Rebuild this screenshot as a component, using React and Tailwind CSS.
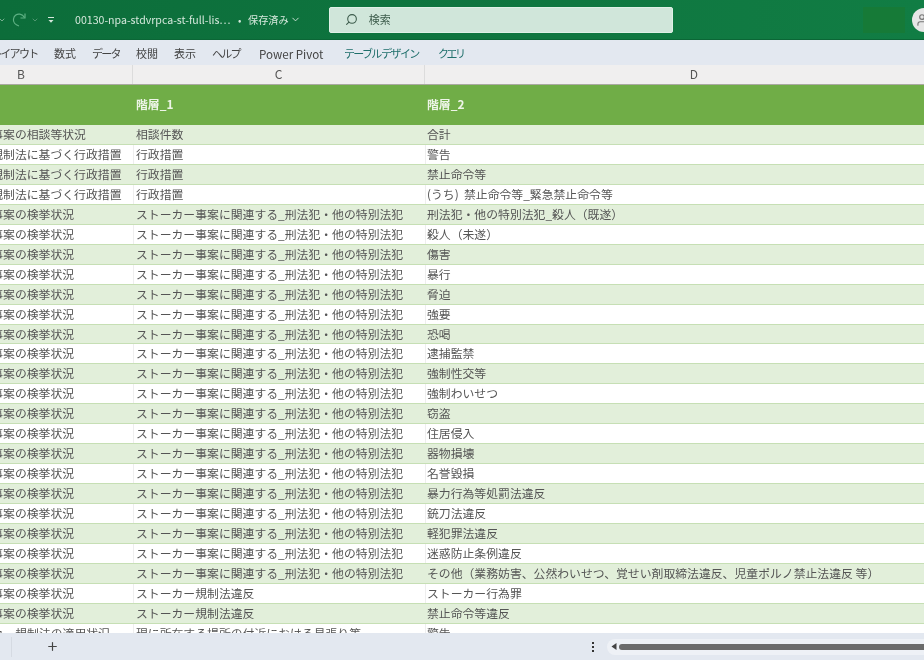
import React from "react";
import { ChevronDown, Search, Plus, User } from "lucide-react";

const font = "font-['Noto_Sans_CJK_JP','Noto_Sans',sans-serif]";

const kenkyo = "ストーカー事案の検挙状況";
const kanren = "ストーカー事案に関連する_刑法犯・他の特別法犯";
const gyosei = "ストーカー規制法に基づく行政措置";

const rows = [
  ["ストーカー事案の相談等状況", "相談件数", "合計"],
  [gyosei, "行政措置", "警告"],
  [gyosei, "行政措置", "禁止命令等"],
  [gyosei, "行政措置", "(うち)\u00a0\u00a0禁止命令等_緊急禁止命令等"],
  [kenkyo, kanren, "刑法犯・他の特別法犯_殺人（既遂）"],
  [kenkyo, kanren, "殺人（未遂）"],
  [kenkyo, kanren, "傷害"],
  [kenkyo, kanren, "暴行"],
  [kenkyo, kanren, "脅迫"],
  [kenkyo, kanren, "強要"],
  [kenkyo, kanren, "恐喝"],
  [kenkyo, kanren, "逮捕監禁"],
  [kenkyo, kanren, "強制性交等"],
  [kenkyo, kanren, "強制わいせつ"],
  [kenkyo, kanren, "窃盗"],
  [kenkyo, kanren, "住居侵入"],
  [kenkyo, kanren, "器物損壊"],
  [kenkyo, kanren, "名誉毀損"],
  [kenkyo, kanren, "暴力行為等処罰法違反"],
  [kenkyo, kanren, "銃刀法違反"],
  [kenkyo, kanren, "軽犯罪法違反"],
  [kenkyo, kanren, "迷惑防止条例違反"],
  [kenkyo, kanren, "その他（業務妨害、公然わいせつ、覚せい剤取締法違反、児童ポルノ禁止法違反 等）"],
  [kenkyo, "ストーカー規制法違反", "ストーカー行為罪"],
  [kenkyo, "ストーカー規制法違反", "禁止命令等違反"],
];

const tabs = [
  { label: "数式", w: "w-[38px]" },
  { label: "データ", w: "w-[44px]", kana: true },
  { label: "校閲", w: "w-[38px]" },
  { label: "表示", w: "w-[38px]" },
  { label: "ヘルプ", w: "w-[47px]", kana: true },
  { label: "Power Pivot", w: "w-[85px] text-[11.6px] leading-[18px] pt-[1px]" },
];

const TitleBar = () => (
  <div className="h-10 shrink-0 flex items-center bg-gradient-to-r from-[#0c6d3a] to-[#117d44] border-b border-[#0b6636] text-[#d5e8dc] overflow-hidden">
    <ChevronDown size={8} className="-ml-[2px] mr-[6px] shrink-0 opacity-80" />
    <svg width="14" height="16" viewBox="0 0 14 16" className="mr-[5px] shrink-0 text-[#5fb184]" fill="none" stroke="currentColor" strokeWidth="1.2">
      <path d="M7 14C3 13 1 10 1.5 7 2 3.5 5 1.5 8 2.2c2 .4 3.5 1.6 4.5 3.3" />
      <path d="M13 1.5v4.5H8.5" />
    </svg>
    <ChevronDown size={8} className="mr-[8px] shrink-0 opacity-50" />
    <svg width="8" height="8" viewBox="0 0 8 8" className="mr-[20px] shrink-0" fill="none" stroke="currentColor">
      <path d="M1 1.5h6" />
      <path d="M1.5 4h5L4 6.8z" fill="currentColor" stroke="none" />
    </svg>
    <span className="w-[163px] shrink-0 text-[10.6px] whitespace-nowrap">00130-npa-stdvrpca-st-full-lis…</span>
    <span className="w-[6px] shrink-0 text-[10px]">•</span>
    <span className="ml-[4px] text-[10.2px] whitespace-nowrap">保存済み</span>
    <ChevronDown size={11} className="ml-[1px] mr-[28px] shrink-0" />
    <div className="w-[344px] h-[26px] shrink-0 flex items-center bg-[#d0e6da] border border-[#dff0e6] rounded-[2px] text-[#3d5c4c]">
      <Search size={13} className="ml-[15px] -scale-x-100" />
      <span className="ml-[11px] text-[11px]">検索</span>
    </div>
    <div className="ml-[190px] w-[42px] h-[26px] shrink-0 bg-[#167a37]" />
    <div className="ml-[7px] w-[24px] h-[24px] shrink-0 rounded-full bg-[#e6e6e6] flex items-center pl-[3px] text-[#777]">
      <User size={14} />
    </div>
  </div>
);

const RibbonTabs = () => (
  <div className="h-[25px] shrink-0 flex items-center pt-[1px] bg-[#e3e8f0] text-[11px] text-[#444] whitespace-nowrap overflow-hidden">
    <span className="-ml-[9px] w-[63px] shrink-0 tracking-[-1.7px]">レイアウト</span>
    {tabs.map((t) => (
      <span key={t.label} className={`${t.w} shrink-0 ${t.kana ? "tracking-[-1.7px]" : ""}`}>
        {t.label}
      </span>
    ))}
    <span className="w-[94px] shrink-0 text-[#1f6f6b] tracking-[-1.7px]">テーブル デザイン</span>
    <span className="shrink-0 text-[#1f6f6b] tracking-[-2.5px]">クエリ</span>
  </div>
);

const ColumnHeaders = () => (
  <div className="h-5 shrink-0 flex bg-[#f0efef] border-b border-[#a9a9a0] text-[12px] text-[#555] overflow-hidden">
    <div className="w-[133px] shrink-0 overflow-hidden border-r border-[#dcdcdc]">
      <div className="-ml-[90px] w-[222px] text-center">B</div>
    </div>
    <div className="w-[292px] shrink-0 text-center border-r border-[#dcdcdc]">C</div>
    <div className="w-[538px] shrink-0 text-center">D</div>
  </div>
);

const Row = ({ b, c, d, odd, last }) => (
  <div
    className={`flex shrink-0 h-[19.96px] text-[11.85px] leading-[18px] text-[#555] whitespace-nowrap border-b border-[#c6dfb4] ${
      odd ? "bg-[#e2efda]" : "bg-white"
    }`}
  >
    <div className="w-[133px] shrink-0 overflow-hidden">
      <div className={last ? "-ml-[44px]" : "-ml-[68px]"}>{b}</div>
    </div>
    <div className={`w-[292px] shrink-0 overflow-hidden pl-[2px] border-l ${odd ? "border-[#e2efda]" : "border-[#eeeeee]"}`}>{c}</div>
    <div className={`w-[499px] shrink-0 overflow-hidden pl-[1px] border-l ${odd ? "border-[#e2efda]" : "border-[#eeeeee]"}`}>{d}</div>
  </div>
);

const Sheet = () => (
  <div className="flex-1 min-h-0 flex flex-col overflow-hidden bg-white">
    <div className="h-10 shrink-0 flex items-center pb-[3px] bg-[#70ad47] text-[11.85px] font-bold text-[#eef5e8] whitespace-nowrap">
      <div className="w-[136px] shrink-0" />
      <div className="w-[291px] shrink-0">階層_1</div>
      <div>階層_2</div>
    </div>
    {rows.map((r, i) => (
      <Row key={i} b={r[0]} c={r[1]} d={r[2]} odd={i % 2 === 0} />
    ))}
    <Row b="ストーカー規制法の適用状況" c="現に所在する場所の付近における見張り等" d="警告" last />
  </div>
);

const BottomBar = () => (
  <div className="h-[27px] shrink-0 flex items-center bg-[#e3e8f0] text-[#444]">
    <div className="w-[12px] h-[20px] border-r border-[#d5dae2]" />
    <Plus size={13} strokeWidth={2.2} className="ml-[34px]" />
    <svg width="4" height="10" viewBox="0 0 4 10" className="ml-[532px] shrink-0" fill="#333">
      <rect x="1" y="0" width="2" height="2" />
      <rect x="1" y="4" width="2" height="2" />
      <rect x="1" y="8" width="2" height="2" />
    </svg>
    <div className="ml-[12px] flex-1 h-[16px] flex items-center bg-[#eef1f6] rounded-l-[8px] pl-[4px] overflow-hidden">
      <svg width="6" height="7" viewBox="0 0 6 7" className="shrink-0" fill="#444">
        <path d="M5.5 0v7L0.5 3.5z" />
      </svg>
      <div className="ml-[2px] flex-1 h-[6px] rounded-l-full bg-[#6b6b6b]" />
    </div>
  </div>
);

export default function App() {
  return (
    <div className={`w-[924px] h-[660px] flex flex-col overflow-hidden blur-[0.45px] ${font}`}>
      <TitleBar />
      <RibbonTabs />
      <ColumnHeaders />
      <Sheet />
      <BottomBar />
    </div>
  );
}
